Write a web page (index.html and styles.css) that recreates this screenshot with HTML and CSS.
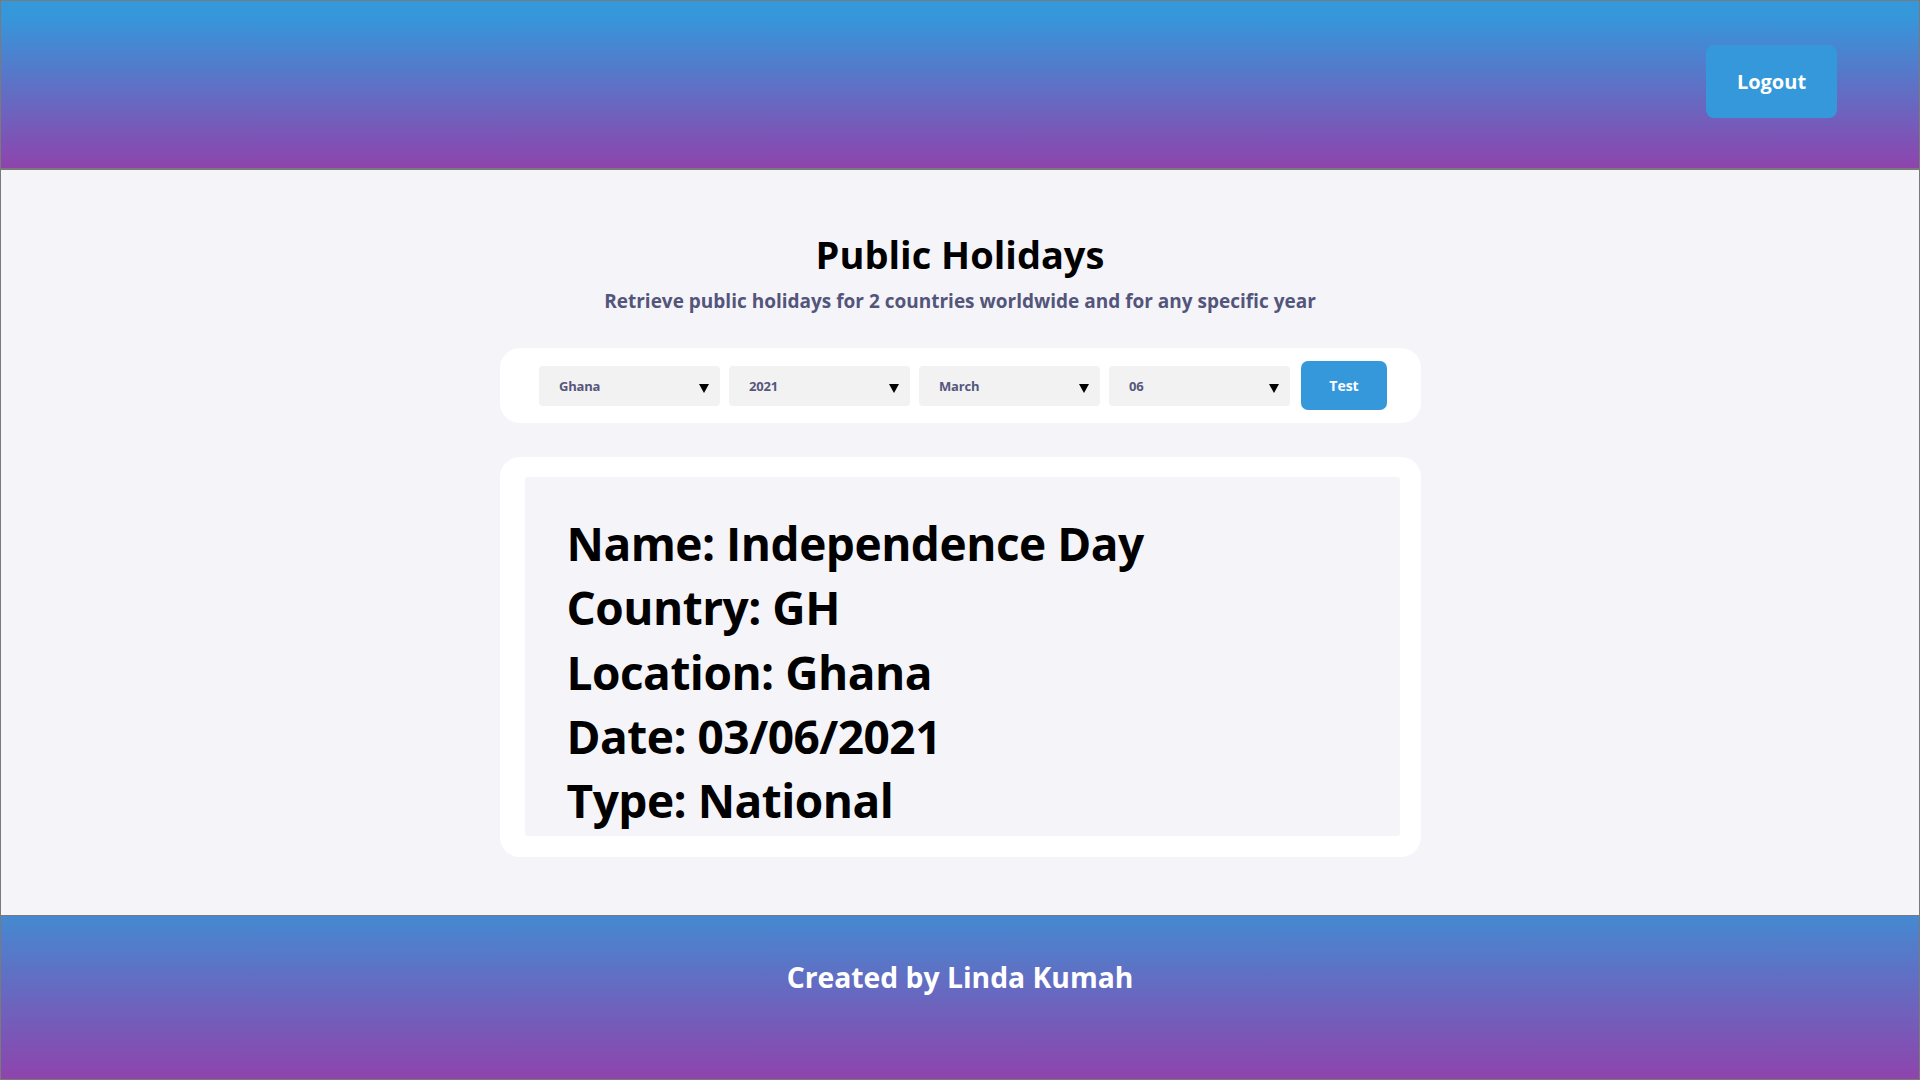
FILE: index.html
```html
<!DOCTYPE html>
<html lang="en">
<head>
<meta charset="utf-8">
<title>Public Holidays</title>
<link rel="stylesheet" href="styles.css">
</head>
<body>
<div class="page">
  <header class="topbar">
    <button class="logout" type="button">Logout</button>
  </header>
  <main class="content">
    <h1 class="title">Public Holidays</h1>
    <p class="subtitle">Retrieve public holidays for 2 countries worldwide and for any specific year</p>
    <form class="filters">
      <div class="field">
        <select class="select"><option>Ghana</option></select>
        <svg class="caret" viewBox="0 0 10 10" width="10" height="10"><path d="M0 1h10L5 10z" fill="#000"/></svg>
      </div>
      <div class="field">
        <select class="select"><option>2021</option></select>
        <svg class="caret" viewBox="0 0 10 10" width="10" height="10"><path d="M0 1h10L5 10z" fill="#000"/></svg>
      </div>
      <div class="field">
        <select class="select"><option>March</option></select>
        <svg class="caret" viewBox="0 0 10 10" width="10" height="10"><path d="M0 1h10L5 10z" fill="#000"/></svg>
      </div>
      <div class="field">
        <select class="select"><option>06</option></select>
        <svg class="caret" viewBox="0 0 10 10" width="10" height="10"><path d="M0 1h10L5 10z" fill="#000"/></svg>
      </div>
      <button class="test-btn" type="button">Test</button>
    </form>
    <section class="result">
      <div class="result-body">
        <h2 class="line">Name: Independence Day</h2>
        <h2 class="line">Country: GH</h2>
        <h2 class="line">Location: Ghana</h2>
        <h2 class="line">Date: 03/06/2021</h2>
        <h2 class="line">Type: National</h2>
      </div>
    </section>
  </main>
  <footer class="footer">
    <p class="credit">Created by Linda Kumah</p>
  </footer>
</div>
</body>
</html>
```

FILE: styles.css
```css
* {
  box-sizing: border-box;
}

html, body {
  margin: 0;
  padding: 0;
}

body {
  font-family: "Open Sans", "Noto Sans", sans-serif;
  font-weight: 700;
  background: #f4f4f9;
}

.page {
  width: 1920px;
  height: 1080px;
  border: 1px solid #7a7a7a;
  display: flex;
  flex-direction: column;
}

.topbar {
  height: 169px;
  flex: none;
  border-bottom: 2px solid #7a7a7a;
  background: linear-gradient(to bottom, #3498db 8%, #8e44ad 100%);
  display: flex;
  justify-content: flex-end;
  align-items: flex-start;
  padding: 44px 82px 0 0;
}

.logout {
  width: 131px;
  height: 73px;
  border: none;
  border-radius: 8px;
  background: #3498db;
  color: #fff;
  font-family: inherit;
  font-weight: 700;
  font-size: 20px;
  padding: 0;
}

.content {
  height: 745px;
  flex: none;
  background: #f4f4f9;
  display: flex;
  flex-direction: column;
  align-items: center;
  padding-top: 60px;
}

.title {
  margin: 0;
  font-size: 38px;
  line-height: 48px;
  color: #000;
}

.subtitle {
  margin: 11px 0 0;
  font-size: 19px;
  line-height: 24px;
  color: #53557b;
}

.filters {
  margin-top: 35px;
  width: 921px;
  height: 75px;
  background: #fff;
  border-radius: 20px;
  display: flex;
  align-items: center;
  justify-content: center;
  gap: 9px;
  padding-left: 6px;
}

.field {
  position: relative;
  width: 181px;
  height: 40px;
}

.select {
  appearance: none;
  -webkit-appearance: none;
  width: 100%;
  height: 100%;
  border: none;
  border-radius: 4px;
  background: #f2f2f2;
  color: #55577d;
  font-family: inherit;
  font-weight: 700;
  font-size: 13px;
  letter-spacing: -0.2px;
  padding: 0 0 0 20px;
  outline: none;
}

.caret {
  position: absolute;
  right: 11px;
  top: 17px;
  width: 10px;
  height: 10px;
  pointer-events: none;
}

.test-btn {
  width: 86px;
  height: 49px;
  margin-left: 2px;
  border: none;
  border-radius: 7px;
  background: #3498db;
  color: #fff;
  font-family: inherit;
  font-weight: 700;
  font-size: 14px;
  padding: 0;
}

.result {
  margin-top: 34px;
  width: 921px;
  height: 400px;
  background: #fff;
  border-radius: 20px;
  padding: 20px 21px 21px 25px;
}

.result-body {
  height: 100%;
  background: #f4f4f9;
  border-radius: 3px;
  padding: 34px 0 0 42px;
  overflow: hidden;
}

.line {
  margin: 0;
  font-size: 46px;
  line-height: 64.25px;
  letter-spacing: -0.5px;
  color: #000;
}

.footer {
  flex: 1;
  border-top: 1px solid #7a7a7a;
  background: linear-gradient(to bottom, #4589d1 0%, #8e44ad 100%);
  padding-top: 42px;
}

.credit {
  margin: 0;
  text-align: center;
  color: #fff;
  font-size: 28.3px;
  line-height: 38px;
}
```
